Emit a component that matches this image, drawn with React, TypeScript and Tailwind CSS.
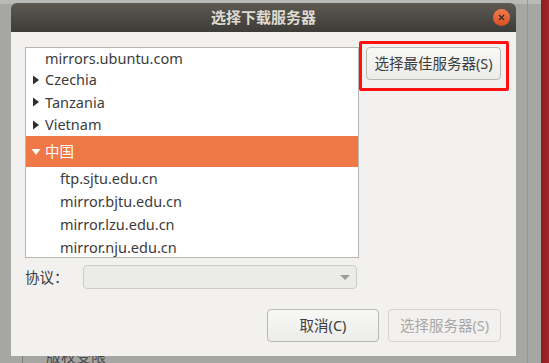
import React from "react";

const FONT = { fontFamily: '"Noto Sans", "Noto Sans CJK SC", sans-serif' };

function RightTri() {
  return (
    <svg width="8" height="10" viewBox="0 0 8 10" className="shrink-0">
      <polygon points="1,0.5 7,5 1,9.5" fill="#2e2e2e" />
    </svg>
  );
}
function DownTri() {
  return (
    <svg width="10" height="8" viewBox="0 0 10 8" className="shrink-0">
      <polygon points="0.5,1 9.5,1 5,7" fill="#ffffff" />
    </svg>
  );
}

function Row({ children, h = "h-[23px]", indent = false, arrow = false }: { children: React.ReactNode; h?: string; indent?: boolean; arrow?: boolean }) {
  return (
    <div className={`flex items-center ${h} ${indent ? "pl-[34px]" : "pl-[6px]"}`}>
      {!indent && <div className="w-[13px] flex items-center">{arrow && <RightTri />}</div>}
      <span className="text-[14.5px] text-[#3c3c3c] leading-none">{children}</span>
    </div>
  );
}

export default function App() {
  return (
    <div className="relative w-[549px] h-[363px] overflow-hidden bg-[#a6a6a4]" style={FONT}>
      {/* background window chrome */}
      <div className="absolute left-0 top-0 w-[549px] h-[4px] bg-[#b9b9b7]" />
      <div className="absolute left-[527px] top-0 w-[1px] h-[363px] bg-[#969694]" />
      <div className="absolute left-[541px] top-0 w-[8px] h-[363px] bg-gradient-to-r from-[#8c1d22] to-[#a3262b]" />
      <div className="absolute left-[22px] top-[340px] w-[1px] h-[30px] bg-[#7f7f7d]" />
      <div className="absolute left-[46px] top-[349px] text-[15px] text-[#4a4a48] leading-none">版权受限</div>

      {/* dialog */}
      <div className="absolute left-[11px] top-[3px] w-[505px] h-[353px] flex flex-col">
        <div className="relative h-[29px] rounded-t-[6px] bg-gradient-to-b from-[#5c5952] to-[#3d3c38] flex items-center justify-center">
          <span className="text-[15px] font-bold text-[#dfdbd2] leading-none">选择下载服务器</span>
          <div className="absolute right-[6px] top-[6px] w-[17px] h-[17px] rounded-full bg-gradient-to-b from-[#f07a4e] to-[#d9501f] flex items-center justify-center">
            <svg width="7" height="7" viewBox="0 0 7 7">
              <path d="M1 1 L6 6 M6 1 L1 6" stroke="#3a2a24" strokeWidth="1.3" />
            </svg>
          </div>
        </div>
        <div className="relative flex-1 bg-[#f2f1f0] pt-[15px] pl-[14px] pr-[15px] flex flex-col">
          <div className="flex">
            <div className="w-[334px] h-[211px] bg-white border border-[#b7b7b4] overflow-hidden">
              <Row h="h-[20px]">mirrors.ubuntu.com</Row>
              <Row h="h-[23px]" arrow>Czechia</Row>
              <Row h="h-[22px]" arrow>Tanzania</Row>
              <Row h="h-[23px]" arrow>Vietnam</Row>
              <div className="flex items-center h-[31px] pl-[5px] bg-[#f07746]">
                <div className="w-[14px] flex items-center"><DownTri /></div>
                <span className="text-[14.5px] text-white leading-none">中国</span>
              </div>
              <Row indent>ftp.sjtu.edu.cn</Row>
              <Row indent>mirror.bjtu.edu.cn</Row>
              <Row indent>mirror.lzu.edu.cn</Row>
              <Row indent>mirror.nju.edu.cn</Row>
            </div>
            <div className="ml-[7px] flex flex-col">
              <div className="relative">
                <button className="w-[135px] h-[33px] rounded-[4px] border border-[#b8b8b5] bg-gradient-to-b from-[#f8f8f7] to-[#ececea] text-[14.5px] text-[#3c3c3c] leading-none">
                  选择最佳服务器(S)
                </button>
                <div className="absolute left-[-7px] top-[-6px] w-[150px] h-[50px] border-[3px] border-[#ff1111] rounded-[2px]" />
              </div>
            </div>
          </div>
          <div className="flex items-center mt-[7px]">
            <span className="w-[58px] text-[14.5px] text-[#3c3c3c] leading-none">协议：</span>
            <div className="relative w-[274px] h-[24px] rounded-[4px] border border-[#cdcdca] bg-[#ebebea]">
              <svg className="absolute right-[6px] top-[9px]" width="10" height="6" viewBox="0 0 10 6">
                <polygon points="0,0 10,0 5,5" fill="#9c9c9a" />
              </svg>
            </div>
          </div>
          <div className="flex justify-end gap-[9px] mt-[20px]">
            <button className="w-[112px] h-[33px] rounded-[4px] border border-[#b8b8b5] bg-gradient-to-b from-[#f8f8f7] to-[#ececea] text-[14.5px] text-[#3c3c3c] leading-none">
              取消(C)
            </button>
            <button className="w-[113px] h-[33px] rounded-[4px] border border-[#d4d4d1] bg-[#f2f1f0] text-[14.5px] text-[#a7a7a5] leading-none">
              选择服务器(S)
            </button>
          </div>
        </div>
      </div>
    </div>
  );
}
